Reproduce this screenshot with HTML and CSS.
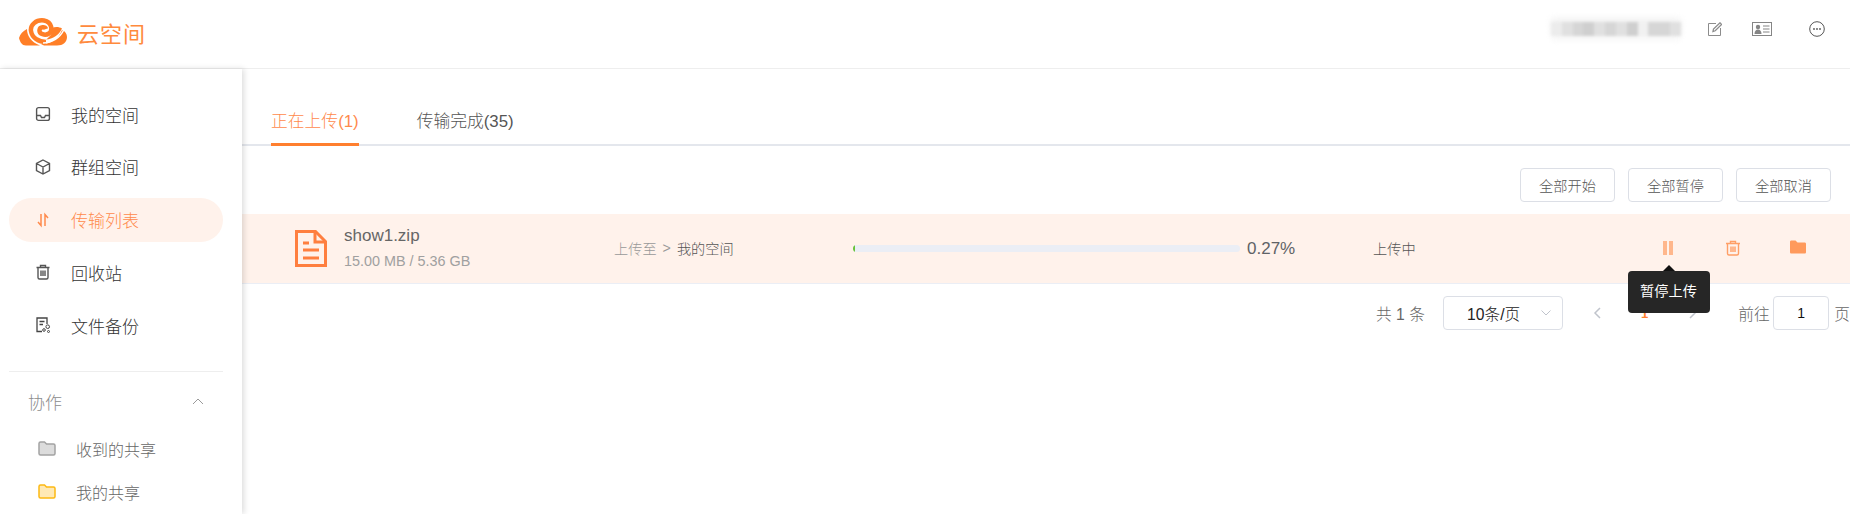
FILE: index.html
```html
<!DOCTYPE html>
<html lang="zh-CN">
<head>
    <meta charset="UTF-8">
    <title>云空间</title>
    <link rel="stylesheet" href="styles.css">
</head>
<body>
    <header class="topbar">
        <div class="brand">
            <svg class="brand-mark" viewBox="0 0 48 28" width="48" height="28">
                <path fill="#ff7f27" d="M0 20C1 16 4 13 8 11 8 18 12 24 21 27.500H7C3 27.500 1 24 0 20z"/>
                <path fill="none" stroke="#ff7f27" stroke-width="4.500" d="M27 11C26 8.500 21 8.500 20.500 12 20 16 26 18 30 15.500 34 12.500 33 4 25 2.500 17 1.500 11 7 12 13 13 20 20 24 27 24"/>
                <path fill="#ff7f27" d="M22 26C31 26 39 22 43 12 46 13 48 16 48 19 48 24 44 27.500 38 27.500H25z"/>
                <path fill="#ff7f27" d="M33 10C36 8.500 40 8.500 43 10.500 40 17 34 21 27 21.500 32 18 34 14 33 10z"/>
                <path fill="none" stroke="#fff" stroke-width="1.500" d="M24 25C33 25 41 20 45 11.500"/>
            </svg>
            <span class="brand-name">云空间</span>
        </div>
        <div class="top-right">
            <div class="user-blur">
                <i class="c1"></i><i class="c2"></i><i class="c3"></i><i class="c4"></i><i class="c2"></i><i class="c3"></i><i class="c2"></i><i class="c4"></i><i class="c5"></i><i class="c3"></i><i class="c3"></i><i class="c2"></i>
            </div>
            <svg class="top-icon edit" viewBox="0 0 14 14" width="14" height="14">
                <path fill="none" stroke="#8c8c8c" d="M8 1.500H.5v12h12V6"/>
                <path fill="none" stroke="#8c8c8c" stroke-width="1.300" d="M5 9.500l.5-2.500L12 .8l1.600 1.600L7.200 8.800z"/>
            </svg>
            <svg class="top-icon card" viewBox="0 0 20 15" width="20" height="15">
                <rect x=".5" y=".5" width="19" height="13" fill="none" stroke="#858585"/>
                <circle cx="6" cy="5" r="2.200" fill="#858585"/>
                <path fill="#858585" d="M2.500 12c0-3 1.500-4.500 3.500-4.500S9.500 9 9.500 12z"/>
                <path stroke="#858585" d="M11 4h6.500M11 7h6.500M11 10h6.500"/>
            </svg>
            <svg class="top-icon more" viewBox="0 0 16 16" width="16" height="16">
                <circle cx="8" cy="8" r="7.300" fill="none" stroke="#555"/>
                <circle cx="5" cy="8" r=".9" fill="#555"/><circle cx="8" cy="8" r=".9" fill="#555"/><circle cx="11" cy="8" r=".9" fill="#555"/>
            </svg>
        </div>
    </header>

    <div class="layout">
        <aside class="sidebar">
            <nav class="nav">
                <a class="nav-item">
                    <svg viewBox="0 0 16 16" width="16" height="16"><rect x="1.600" y="1.600" width="12.800" height="12.800" rx="2" fill="none" stroke="#555" stroke-width="1.400"/><path fill="none" stroke="#555" stroke-width="1.400" d="M2 9.500h3.500l1 2h3l1-2H14"/></svg>
                    <span>我的空间</span>
                </a>
                <a class="nav-item">
                    <svg viewBox="0 0 16 16" width="16" height="16"><path fill="none" stroke="#555" stroke-width="1.400" d="M8 1l6.500 3.500v7L8 15l-6.500-3.500v-7zM1.500 4.500L8 8l6.500-3.500M8 8v7"/></svg>
                    <span>群组空间</span>
                </a>
                <a class="nav-item active">
                    <svg viewBox="0 0 16 16" width="16" height="16"><path fill="none" stroke="#ff8a4c" stroke-width="1.500" d="M6 2v11.500L3 10M10 14V2.500L13 6"/></svg>
                    <span>传输列表</span>
                </a>
                <a class="nav-item">
                    <svg viewBox="0 0 16 16" width="16" height="16"><path fill="none" stroke="#555" stroke-width="1.400" d="M1.500 3.500h13M5.500 3.500V1.500h5v2M3 3.500v10c0 1 .5 1.500 1.500 1.500h7c1 0 1.500-.5 1.500-1.500v-10M6 6.500v5.500M8 6.500v5.500M10 6.500v5.500"/></svg>
                    <span>回收站</span>
                </a>
                <a class="nav-item">
                    <svg viewBox="0 0 16 16" width="16" height="16"><path fill="none" stroke="#444" stroke-width="1.300" d="M7 14.500H2V1h10v6M4.500 4.500h5M4.500 7.500h3.500"/><circle cx="12.700" cy="9.700" r="1.800" fill="none" stroke="#444"/><circle cx="9" cy="13" r="1.300" fill="none" stroke="#444"/><circle cx="13.500" cy="14.500" r="1" fill="none" stroke="#444"/></svg>
                    <span>文件备份</span>
                </a>
            </nav>
            <div class="side-divider"></div>
            <div class="group-head">
                <span>协作</span>
                <svg viewBox="0 0 12 7" width="12" height="7"><path fill="none" stroke="#9a9a9a" d="M1 6l5-5 5 5"/></svg>
            </div>
            <a class="sub-item">
                <svg viewBox="0 0 18 15" width="18" height="15"><path fill="#dcdcdc" stroke="#a3a3a3" stroke-width="1.500" d="M1 2.500C1 1.500 1.500 1 2.500 1h4l2 2h7c1 0 1.500.5 1.500 1.500v8c0 1-.5 1.500-1.500 1.500h-13C1.500 14 1 13.500 1 12.500z"/></svg>
                <span>收到的共享</span>
            </a>
            <a class="sub-item">
                <svg viewBox="0 0 18 15" width="18" height="15"><path fill="#ffe9b5" stroke="#fdb913" stroke-width="1.500" d="M1 2.500C1 1.500 1.500 1 2.500 1h4l2 2h7c1 0 1.500.5 1.500 1.500v8c0 1-.5 1.500-1.500 1.500h-13C1.500 14 1 13.500 1 12.500z"/></svg>
                <span>我的共享</span>
            </a>
        </aside>

        <main class="content">
            <div class="tabs">
                <div class="tab active">正在上传(1)</div>
                <div class="tab">传输完成(35)</div>
            </div>

            <div class="toolbar">
                <button class="btn">全部开始</button>
                <button class="btn">全部暂停</button>
                <button class="btn">全部取消</button>
            </div>

            <div class="row">
                <svg class="file-icon" viewBox="0 0 32 37" width="32" height="37">
                    <path fill="none" stroke="#ff7f3f" stroke-width="3" d="M1.500 1.500h19l10 10v24h-29z"/>
                    <path fill="none" stroke="#ff7f3f" stroke-width="3" d="M20 2v10h10M8 13h6M8 20h16M8 28h16"/>
                </svg>
                <div class="file-info">
                    <div class="file-name">show1.zip</div>
                    <div class="file-size">15.00 MB / 5.36 GB</div>
                </div>
                <div class="file-path"><span class="path-label">上传至</span><span class="path-sep">&gt;</span><span>我的空间</span></div>
                <div class="progress">
                    <div class="bar"><div class="bar-fill" style="width: 0.27%"></div></div>
                    <span class="percent">0.27%</span>
                </div>
                <div class="status">上传中</div>
                <div class="actions">
                    <div class="action">
                        <svg viewBox="0 0 12 16" width="12" height="16"><path fill="#ffb78c" d="M1 1h4v14H1zM7 1h4v14H7z"/></svg>
                        <div class="tooltip">暂停上传</div>
                    </div>
                    <div class="action">
                        <svg viewBox="0 0 16 16" width="16" height="16"><path fill="none" stroke="#ff9f66" stroke-width="1.400" d="M1 3.500h14M5.500 3.500V1.500h5v2M2.500 3.500v10c0 1 .5 1.500 1.500 1.500h8c1 0 1.500-.5 1.500-1.500v-10M6 6.500v5.500M8 6.500v5.500M10 6.500v5.500"/></svg>
                    </div>
                    <div class="action">
                        <svg viewBox="0 0 16 14" width="16" height="14"><path fill="#ff9a5c" d="M0 2C0 1 .5.500 1.500.500h4l2 2h7c1 0 1.500.5 1.500 1.500v8c0 1-.5 1.500-1.500 1.500h-13C.5 13.500 0 13 0 12z"/></svg>
                    </div>
                </div>
            </div>

            <div class="pager">
                <span class="total">共 1 条</span>
                <div class="page-size">
                    <span>10条/页</span>
                    <svg viewBox="0 0 10 6" width="10" height="6"><path fill="none" stroke="#c0c4cc" d="M.5.500L5 5 9.500.500"/></svg>
                </div>
                <svg class="pg-arrow" viewBox="0 0 8 12" width="8" height="12"><path fill="none" stroke="#c0c4cc" stroke-width="1.500" d="M7 1L2 6l5 5"/></svg>
                <span class="page-num">1</span>
                <svg class="pg-arrow" viewBox="0 0 8 12" width="8" height="12"><path fill="none" stroke="#c0c4cc" stroke-width="1.500" d="M1 1l5 5-5 5"/></svg>
                <span class="goto">前往</span>
                <div class="page-input">1</div>
                <span class="goto-end">页</span>
            </div>
        </main>
    </div>
</body>
</html>
```

FILE: styles.css
```css
* {
    box-sizing: border-box;
}

body {
    margin: 0;
    height: 100vh;
    overflow: hidden;
    display: flex;
    flex-direction: column;
    font-family: "Liberation Sans", "Noto Sans CJK SC", sans-serif;
    font-size: 14px;
    font-weight: 300;
    color: #333;
    background: #fff;
}

/* top bar */
.topbar {
    height: 69px;
    flex-shrink: 0;
    display: flex;
    justify-content: space-between;
    align-items: center;
    padding: 0 0 0 19px;
    border-bottom: 1px solid #eeeeee;
}

.brand {
    display: flex;
    align-items: center;
    gap: 10px;
    margin-top: -4px;
}

.brand-name {
    font-size: 22px;
    font-weight: 400;
    letter-spacing: 1px;
    color: #ff8a3d;
}

.top-right {
    display: flex;
    align-items: center;
    margin-top: -10px;
}

.user-blur {
    display: flex;
    width: 130px;
    height: 14px;
    margin-right: 27px;
    filter: blur(1.5px);
    box-shadow: 0 -4px 6px #f2f2f2, 0 4px 6px #f6f6f6;
}

.user-blur i {
    flex: 1;
}

.c1 { background: #ececec; }
.c2 { background: #e0e0e0; }
.c3 { background: #d6d6d6; }
.c4 { background: #cfcfcf; }
.c5 { background: #f1f1f1; }

.top-icon.edit {
    margin-right: 30px;
}

.top-icon.card {
    margin-right: 37px;
}

.top-icon.more {
    margin-right: 25px;
}

.layout {
    flex: 1;
    display: flex;
    min-height: 0;
}

/* sidebar */
.sidebar {
    width: 242px;
    flex-shrink: 0;
    padding: 23px 19px 0 9px;
    box-shadow: 2px 0 6px rgba(0, 0, 0, 0.14);
    z-index: 1;
    background: #fff;
}

.nav-item {
    height: 44px;
    margin-bottom: 8.750px;
    padding-left: 26px;
    display: flex;
    align-items: center;
    gap: 20px;
    font-size: 17px;
    color: #333;
    border-radius: 22px;
}

.nav-item.active {
    background: #fff2eb;
    color: #ff8a4c;
}

.side-divider {
    height: 1px;
    margin-top: 24px;
    background: #eeeeee;
}

.group-head {
    height: 58px;
    padding: 0 19px;
    display: flex;
    justify-content: space-between;
    align-items: center;
    font-size: 17px;
    color: #8c8c8c;
}

.sub-item {
    height: 43px;
    padding-left: 29px;
    display: flex;
    align-items: center;
    gap: 20px;
    font-size: 16px;
    color: #666;
    margin-top: -3px;
    margin-bottom: 3px;
}

/* main area */
.content {
    flex: 1;
    min-width: 0;
}

.tabs {
    height: 77px;
    padding: 34px 0 0 29px;
    display: flex;
    gap: 58px;
    border-bottom: 2px solid #e4e7ed;
}

.tab {
    height: 43px;
    line-height: 38px;
    font-size: 16.800px;
    color: #555;
}

.tab.active {
    color: #ff8a4c;
    border-bottom: 3px solid #ff7f2f;
}

.toolbar {
    height: 68px;
    padding: 22px 19px 0 0;
    display: flex;
    justify-content: flex-end;
    gap: 13px;
}

.btn {
    width: 95px;
    height: 34px;
    padding: 0;
    font-family: inherit;
    font-size: 14.200px;
    font-weight: 300;
    color: #555;
    background: #fff;
    border: 1px solid #dcdfe6;
    border-radius: 4px;
}

.row {
    height: 70px;
    display: flex;
    align-items: center;
    background: #fff2eb;
    border-bottom: 1px solid #ebeef5;
    font-size: 14.200px;
}

.file-icon {
    margin-left: 53px;
    flex-shrink: 0;
}

.file-info {
    width: 270px;
    margin-left: 17px;
    margin-top: -2px;
}

.file-name {
    font-size: 17px;
    color: #666;
    margin-bottom: 7px;
}

.file-size {
    font-size: 14.400px;
    color: #a0a0a0;
}

.file-path {
    width: 239px;
    margin-top: -2px;
    display: flex;
    align-items: center;
    gap: 6px;
    color: #555;
}

.path-label,
.path-sep {
    color: #999;
}

.progress {
    width: 520px;
    display: flex;
    align-items: center;
    gap: 7px;
}

.bar {
    width: 387px;
    height: 7px;
    background: #ebeef5;
    border-radius: 4px;
    overflow: hidden;
}

.bar-fill {
    height: 100%;
    min-width: 2px;
    background: #67c23a;
}

.percent {
    font-size: 17px;
    color: #606266;
}

.status {
    width: 285px;
    margin-top: -2px;
    color: #555;
}

.actions {
    display: flex;
    flex-shrink: 0;
    width: 195px;
    margin-left: -23px;
    margin-top: -2px;
}

.action {
    position: relative;
    width: 65px;
    display: flex;
    justify-content: center;
}

.tooltip {
    position: absolute;
    top: 31px;
    left: -7.500px;
    width: 82px;
    height: 42px;
    line-height: 40px;
    text-align: center;
    font-size: 14.200px;
    font-weight: 400;
    color: #fff;
    background: #262626;
    border-radius: 4px;
    z-index: 2;
}

.tooltip::before {
    content: "";
    position: absolute;
    top: -6px;
    left: 35px;
    border: 6px solid transparent;
    border-top: 0;
    border-bottom-color: #111;
}

/* pagination */
.pager {
    padding-top: 12px;
    display: flex;
    align-items: center;
    font-size: 15.700px;
    color: #666;
    white-space: nowrap;
}

.total {
    margin-left: 1134px;
    width: 67px;
}

.page-size {
    width: 120px;
    height: 34px;
    padding: 0 11px 0 23px;
    display: flex;
    justify-content: space-between;
    align-items: center;
    color: #222;
    border: 1px solid #dcdfe6;
    border-radius: 4px;
}

.pg-arrow {
    margin-left: 30px;
}

.page-num {
    margin-left: 40px;
    color: #ff7f2f;
    font-weight: 700;
    font-size: 13px;
}

.page-num + .pg-arrow {
    margin-left: 41px;
}

.goto {
    margin-left: 41px;
    width: 35px;
}

.page-input {
    width: 56px;
    height: 34px;
    line-height: 32px;
    text-align: center;
    font-size: 14px;
    font-weight: 400;
    color: #111;
    border: 1px solid #dcdfe6;
    border-radius: 4px;
}

.goto-end {
    margin-left: 5px;
}
```
